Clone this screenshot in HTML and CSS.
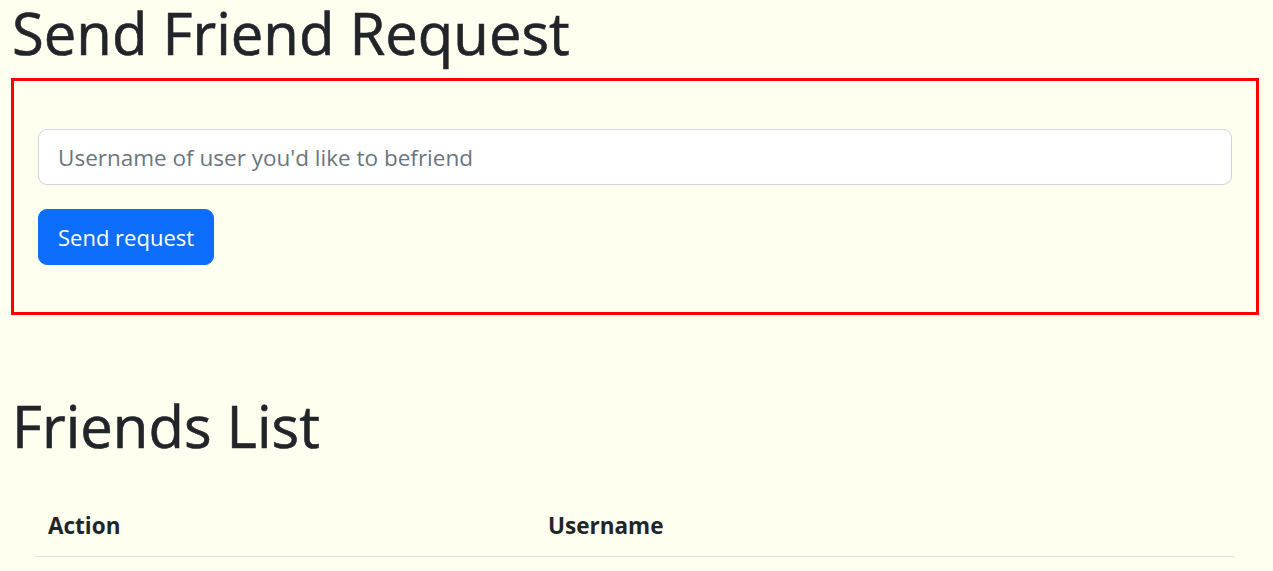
FILE: index.html
```html
<!DOCTYPE html>
<html lang="en">
<head>
<meta charset="utf-8">
<title>Friends</title>
<link rel="stylesheet" href="styles.css">
</head>
<body>
<main class="page">
  <h1 class="title">Send Friend Request</h1>
  <section class="request-box">
    <form class="request-form">
      <input class="field" type="text" placeholder="Username of user you'd like to befriend">
      <button class="btn" type="button">Send request</button>
    </form>
  </section>
  <h1 class="title list-title">Friends List</h1>
  <table class="friends">
    <thead>
      <tr>
        <th class="col-action">Action</th>
        <th>Username</th>
      </tr>
    </thead>
  </table>
</main>
</body>
</html>
```

FILE: styles.css
```css
html, body {
  margin: 0;
  padding: 0;
  background: #fffff0;
}
body {
  font-family: "Open Sans", "Noto Sans", sans-serif;
  color: #212529;
}
.page {
  padding: 0 14px 0 11px;
}
.title {
  margin: 0 0 12px 0;
  font-size: 58px;
  font-weight: 400;
  line-height: 66px;
  padding-left: 1px;
  -webkit-text-stroke: 0.6px #212529;
}
.request-box {
  border: 3px solid #ff0000;
  padding: 48px 24px 47px;
}
.request-form {
  display: flex;
  flex-direction: column;
  align-items: flex-start;
  gap: 24px;
}
.field {
  box-sizing: border-box;
  width: 100%;
  height: 56px;
  margin: 0;
  padding: 0 19px;
  border: 1px solid #ced4da;
  border-radius: 9px;
  background: #ffffff;
  font-family: inherit;
  font-size: 22.5px;
  color: #212529;
  outline: none;
}
.field::placeholder {
  color: #6c757d;
  opacity: 1;
}
.btn {
  box-sizing: border-box;
  height: 56px;
  margin: 0;
  padding: 0 19px;
  border: 1px solid #0d6efd;
  border-radius: 9px;
  background: #0d6efd;
  color: #ffffff;
  font-family: inherit;
  font-size: 22px;
  cursor: pointer;
}
.list-title {
  margin-top: 78px;
  margin-bottom: 37px;
}
.friends {
  width: 1200px;
  margin-left: 24px;
  border-collapse: collapse;
}
.friends th {
  text-align: left;
  padding: 12px 13px;
  line-height: 36px;
  font-size: 22.5px;
  font-weight: 700;
  border-bottom: 1px solid #dee2e6;
}
.friends .col-action {
  width: 474px;
}
```
